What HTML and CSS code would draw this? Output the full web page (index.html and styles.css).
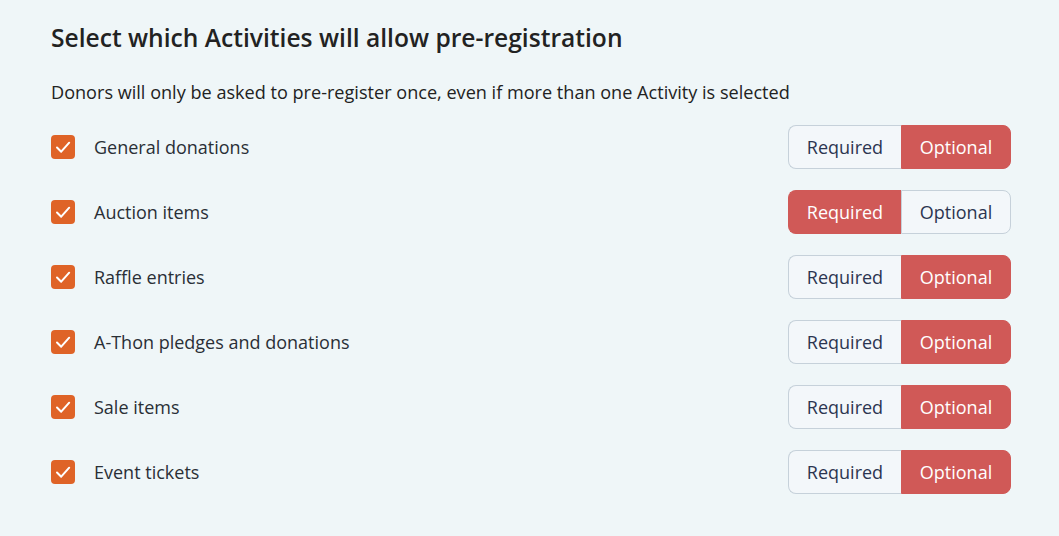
FILE: index.html
```html
<!DOCTYPE html>
<html lang="en">
<head>
    <meta charset="UTF-8">
    <title>Pre-registration</title>
    <link rel="stylesheet" href="styles.css">
</head>
<body>
    <div class="container">
        <h1>Select which Activities will allow pre-registration</h1>
        <p class="hint">Donors will only be asked to pre-register once, even if more than one Activity is selected</p>

        <div class="activity">
            <label class="check"><span class="box"><svg viewBox="0 0 24 24"><path d="M6 12.5l4.2 4.2 8-9"/></svg></span>General donations</label>
            <div class="toggle"><button>Required</button><button class="active">Optional</button></div>
        </div>
        <div class="activity">
            <label class="check"><span class="box"><svg viewBox="0 0 24 24"><path d="M6 12.5l4.2 4.2 8-9"/></svg></span>Auction items</label>
            <div class="toggle"><button class="active">Required</button><button>Optional</button></div>
        </div>
        <div class="activity">
            <label class="check"><span class="box"><svg viewBox="0 0 24 24"><path d="M6 12.5l4.2 4.2 8-9"/></svg></span>Raffle entries</label>
            <div class="toggle"><button>Required</button><button class="active">Optional</button></div>
        </div>
        <div class="activity">
            <label class="check"><span class="box"><svg viewBox="0 0 24 24"><path d="M6 12.5l4.2 4.2 8-9"/></svg></span>A-Thon pledges and donations</label>
            <div class="toggle"><button>Required</button><button class="active">Optional</button></div>
        </div>
        <div class="activity">
            <label class="check"><span class="box"><svg viewBox="0 0 24 24"><path d="M6 12.5l4.2 4.2 8-9"/></svg></span>Sale items</label>
            <div class="toggle"><button>Required</button><button class="active">Optional</button></div>
        </div>
        <div class="activity">
            <label class="check"><span class="box"><svg viewBox="0 0 24 24"><path d="M6 12.5l4.2 4.2 8-9"/></svg></span>Event tickets</label>
            <div class="toggle"><button>Required</button><button class="active">Optional</button></div>
        </div>
    </div>
</body>
</html>
```

FILE: styles.css
```css
body {
    margin: 0;
    background-color: #eff6f8;
    font-family: "Open Sans", Arial, sans-serif;
    color: #222;
}
.container {
    width: 960px;
    padding: 20px 0 0 51px;
}
h1 {
    margin: 0;
    font-size: 24.6px;
    line-height: 36px;
    font-weight: 600;
    color: #222;
}
.hint {
    margin: 23px 0 20px;
    font-size: 18.1px;
    line-height: 26px;
}
.activity {
    display: flex;
    justify-content: space-between;
    align-items: center;
    height: 44px;
    margin-bottom: 21px;
}
.check {
    display: flex;
    align-items: center;
    gap: 19px;
    font-size: 18px;
    color: #2a2f36;
}
.box {
    width: 24px;
    height: 24px;
    border-radius: 4px;
    background: #df6327;
    display: flex;
}
.box svg {
    width: 24px;
    height: 24px;
    fill: none;
    stroke: #fff;
    stroke-width: 2;
    stroke-linecap: round;
    stroke-linejoin: round;
}
.toggle {
    display: flex;
    height: 44px;
}
.toggle button {
    font-family: inherit;
    font-size: 18px;
    color: #2b3550;
    background: #f3f7fa;
    border: 1px solid #c6d1da;
    padding: 0;
    cursor: pointer;
}
.toggle button:first-child {
    width: 113px;
    border-radius: 8px 0 0 8px;
    border-right: none;
}
.toggle button:last-child {
    width: 110px;
    border-radius: 0 8px 8px 0;
}
.toggle button.active {
    background: #d05957;
    border-color: #d05957;
    color: #fff;
}
```
